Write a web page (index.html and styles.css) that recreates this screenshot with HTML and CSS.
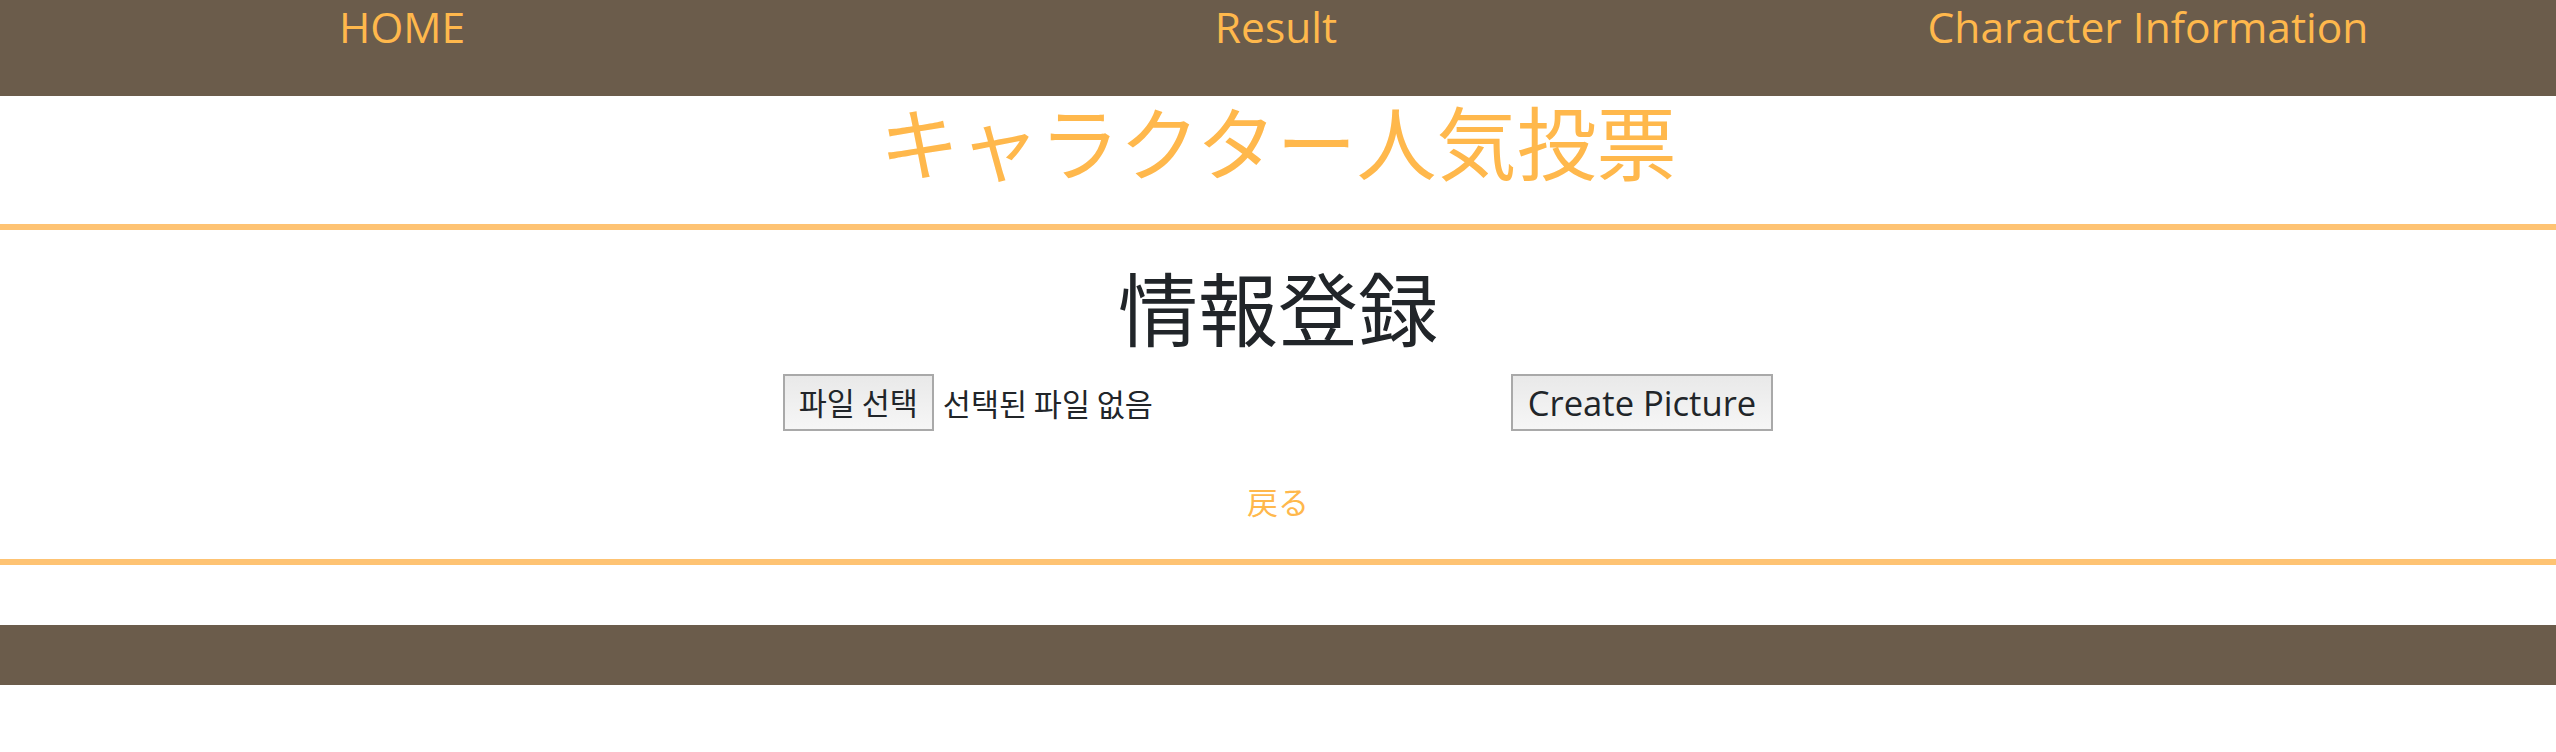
FILE: index.html
```html
<!DOCTYPE html>
<html lang="ja">
<head>
<meta charset="utf-8">
<title>キャラクター人気投票</title>
<link rel="stylesheet" href="styles.css">
</head>
<body>
<header class="site-header">
  <ul class="nav">
    <li class="nav-item"><a class="nav-link" href="#">HOME</a></li>
    <li class="nav-item"><a class="nav-link" href="#">Result</a></li>
    <li class="nav-item"><a class="nav-link" href="#">Character Information</a></li>
  </ul>
</header>
<main class="main">
  <h1 class="site-title">キャラクター人気投票</h1>
  <section class="panel">
    <h1 class="panel-title">情報登録</h1>
    <form class="upload-row">
      <div class="file-input">
        <span class="file-btn">파일 선택</span>
        <span class="file-label">선택된 파일 없음</span>
      </div>
      <button type="button" class="btn">Create Picture</button>
    </form>
    <div class="back"><a class="back-link" href="#">戻る</a></div>
  </section>
</main>
<footer class="site-footer"></footer>
</body>
</html>
```
FILE: styles.css
```css
html, body {
  margin: 0;
  padding: 0;
  background: #ffffff;
}
body {
  font-family: "Noto Sans CJK JP", "Open Sans", sans-serif;
  font-size: 32px;
  line-height: 1.5;
  color: #212529;
}
.site-header {
  background: #6b5c4b;
  height: 96px;
}
.nav {
  list-style: none;
  margin: 0;
  padding: 0;
  display: grid;
  grid-template-columns: 804px 944px 800px;
}
.nav-item {
  text-align: center;
  font-size: 42.5px;
  line-height: 50px;
}
.nav-link {
  font-family: "Open Sans", sans-serif;
  font-size: 42.5px;
  color: #ffb84c;
  text-decoration: none;
}
.site-title {
  margin: 0;
  padding-bottom: 42px;
  text-align: center;
  font-family: "Noto Sans CJK JP", sans-serif;
  font-weight: 400;
  font-size: 80px;
  line-height: 86px;
  color: #ffb84c;
}
.panel {
  border-top: 6px solid #fec373;
  border-bottom: 6px solid #fec373;
  padding: 32px 0 35px;
  text-align: center;
}
.panel-title {
  margin: 0 0 26px;
  font-family: "Noto Sans CJK JP", sans-serif;
  font-weight: 400;
  font-size: 80px;
  line-height: 86px;
  color: #212529;
}
.upload-row {
  margin: 0;
  display: flex;
  justify-content: center;
  align-items: center;
  gap: 10px;
}
.file-input {
  width: 718px;
  display: flex;
  align-items: center;
  gap: 9px;
  text-align: left;
}
.file-btn,
.btn {
  box-sizing: border-box;
  height: 57px;
  border: 2px solid #a9a9a9;
  background: linear-gradient(#e9e9e9, #f6f6f6);
  color: #212529;
  line-height: 53px;
  padding: 0 15px;
  white-space: nowrap;
}
.file-btn {
  font-family: "Noto Sans CJK KR", sans-serif;
  font-size: 30.5px;
  padding: 0 14px;
}
.file-label {
  font-family: "Noto Sans CJK KR", sans-serif;
  font-size: 30.5px;
  line-height: 40px;
  color: #212529;
  white-space: nowrap;
}
.btn {
  margin: 0;
  font-family: "Open Sans", sans-serif;
  font-size: 34.6px;
}
.back {
  margin-top: 47px;
  font-size: 31px;
  line-height: 46px;
}
.back-link {
  font-family: "Noto Sans CJK JP", sans-serif;
  font-size: 31px;
  color: #ffb84c;
  text-decoration: none;
}
.site-footer {
  margin-top: 60px;
  height: 60px;
  background: #6b5c4b;
}
```
